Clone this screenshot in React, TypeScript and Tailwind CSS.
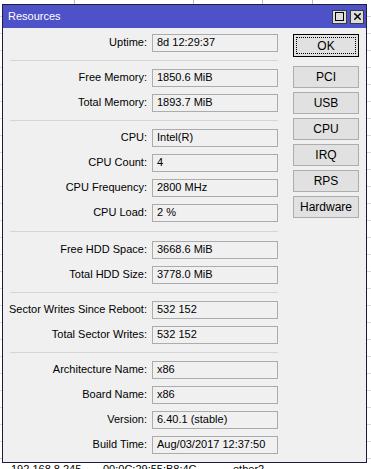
import { X } from "lucide-react";

const groups = [
  [["Uptime", "8d 12:29:37"]],
  [
    ["Free Memory", "1850.6 MiB"],
    ["Total Memory", "1893.7 MiB"],
  ],
  [
    ["CPU", "Intel(R)"],
    ["CPU Count", "4"],
    ["CPU Frequency", "2800 MHz"],
    ["CPU Load", "2 %"],
  ],
  [
    ["Free HDD Space", "3668.6 MiB"],
    ["Total HDD Size", "3778.0 MiB"],
  ],
  [
    ["Sector Writes Since Reboot", "532 152"],
    ["Total Sector Writes", "532 152"],
  ],
  [
    ["Architecture Name", "x86"],
    ["Board Name", "x86"],
    ["Version", "6.40.1 (stable)"],
    ["Build Time", "Aug/03/2017 12:37:50"],
  ],
];

const buttons = ["PCI", "USB", "CPU", "IRQ", "RPS", "Hardware"];

function Field({ label, value }: { label: string; value: string }) {
  return (
    <div className="flex h-[25px] items-center">
      <div className="w-[144px] text-right text-black">{label}:</div>
      <div className="ml-[5px] flex h-[18px] w-[126px] items-center border border-[#acacac] bg-[#f0f0f0] pl-[4px] text-black">
        {value}
      </div>
    </div>
  );
}

export default function App() {
  return (
    <div
      className="relative h-[469px] w-[371px] overflow-hidden bg-white text-[11px]"
      style={{ fontFamily: '"Liberation Sans", Arial, sans-serif' }}
    >
      {/* list behind the dialog */}
      <div className="flex flex-col">
        <div className="flex h-[17px] border-b border-[#d9d9d9]">
          <div className="w-[75px] border-r border-[#bcbcbc]" />
          <div className="w-[119px] border-r border-[#bcbcbc]" />
          <div className="w-[69px] border-r border-[#bcbcbc]" />
          <div className="w-[50px] border-r border-[#bcbcbc]" />
        </div>
        {Array.from({ length: 26 }).map((_, i) => (
          <div key={i} className="h-[17px] border-b border-[#d9d9d9]" />
        ))}
        <div className="flex h-[17px] items-start pt-[2px] text-black">
          <div className="w-[95px] pl-[11px]">192.168.8.245</div>
          <div className="w-[130px] pl-[8px]">00:0C:29:55:B8:4C</div>
          <div className="pl-[8px]">ether2</div>
        </div>
      </div>

      {/* dialog window */}
      <div className="absolute left-[2px] top-[4px] flex h-[459px] w-[365px] flex-col border border-[#1e1e3c] bg-[#f0f0f0]">
        <div className="flex h-[23px] items-center justify-between bg-[#4e52c9] pl-[5px] pr-[2px]">
          <span className="text-[11px] text-white">Resources</span>
          <div className="flex gap-[3px]">
            <div className="flex h-[14px] w-[15px] items-center justify-center border border-[#3a3a3a] bg-[#dcdcdc]">
              <div className="h-[9px] w-[9px] border border-black" />
            </div>
            <div className="flex h-[14px] w-[14px] items-center justify-center border border-[#3a3a3a] bg-[#dcdcdc]">
              <X className="h-[11px] w-[11px] text-black" strokeWidth={3} />
            </div>
          </div>
        </div>

        <div className="flex pt-[2px]">
          <div className="w-[290px]">
            {groups.map((g, gi) => (
              <div key={gi}>
                {gi > 0 && (
                  <div className={`flex items-center ${gi === 3 ? "h-[12px]" : "h-[10px]"}`}>
                    <div className="ml-[7px] h-px w-[268px] bg-[#d5d5d5]" />
                  </div>
                )}
                {g.map(([l, v]) => (
                  <Field key={l} label={l} value={v} />
                ))}
              </div>
            ))}
          </div>

          <div className="mt-[4px] flex w-[66px] flex-col">
            <button className="flex h-[23px] items-center justify-center border border-black bg-[#e1e1e1] p-[2px] text-[12px] text-black">
              <span className="flex h-full w-full items-center justify-center border border-dotted border-black">
                OK
              </span>
            </button>
            <div className="mt-[9px] flex flex-col gap-[4px]">
              {buttons.map((b) => (
                <button
                  key={b}
                  className="flex h-[22px] items-center justify-center border border-[#adadad] bg-[#e1e1e1] text-[12px] text-black"
                >
                  {b}
                </button>
              ))}
            </div>
          </div>
        </div>
      </div>
    </div>
  );
}
